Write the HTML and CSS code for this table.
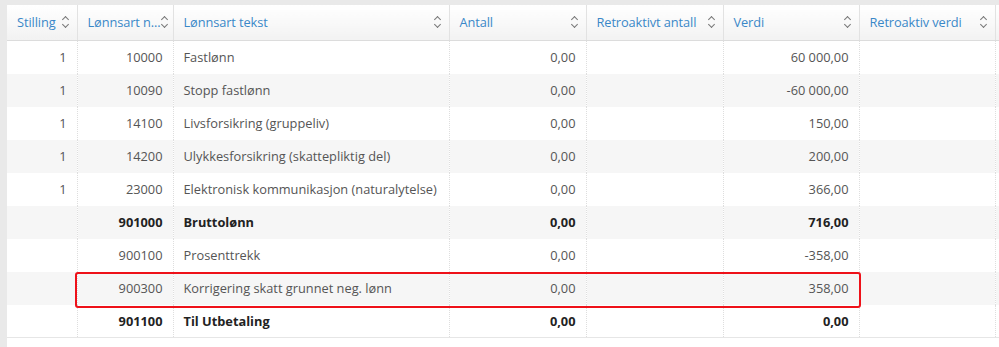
FILE: index.html
```html
<!DOCTYPE html>
<html>
<head>
<meta charset="utf-8">
<link rel="stylesheet" href="styles.css">
</head>
<body>
<div class="frame">
  <div class="grid-wrap">
    <table class="grid">
      <colgroup>
        <col class="c1"><col class="c2"><col class="c3"><col class="c4"><col class="c5"><col class="c6"><col class="c7"><col class="c8">
      </colgroup>
      <thead>
        <tr>
          <th><div class="hc"><span class="h">Stilling</span><span class="sort"></span></div></th>
          <th><div class="hc"><span class="h">Lønnsart n...</span><span class="sort"></span></div></th>
          <th><div class="hc"><span class="h">Lønnsart tekst</span><span class="sort"></span></div></th>
          <th><div class="hc"><span class="h">Antall</span><span class="sort"></span></div></th>
          <th><div class="hc"><span class="h">Retroaktivt antall</span><span class="sort"></span></div></th>
          <th><div class="hc"><span class="h">Verdi</span><span class="sort"></span></div></th>
          <th><div class="hc"><span class="h">Retroaktiv verdi</span><span class="sort"></span></div></th>
          <th></th>
        </tr>
      </thead>
      <tbody>
        <tr><td class="r">1</td><td class="r">10000</td><td>Fastlønn</td><td class="r">0,00</td><td></td><td class="r">60 000,00</td><td></td><td></td></tr>
        <tr><td class="r">1</td><td class="r">10090</td><td>Stopp fastlønn</td><td class="r">0,00</td><td></td><td class="r">-60 000,00</td><td></td><td></td></tr>
        <tr><td class="r">1</td><td class="r">14100</td><td>Livsforsikring (gruppeliv)</td><td class="r">0,00</td><td></td><td class="r">150,00</td><td></td><td></td></tr>
        <tr><td class="r">1</td><td class="r">14200</td><td>Ulykkesforsikring (skattepliktig del)</td><td class="r">0,00</td><td></td><td class="r">200,00</td><td></td><td></td></tr>
        <tr><td class="r">1</td><td class="r">23000</td><td>Elektronisk kommunikasjon (naturalytelse)</td><td class="r">0,00</td><td></td><td class="r">366,00</td><td></td><td></td></tr>
        <tr class="b"><td class="r"></td><td class="r">901000</td><td>Bruttolønn</td><td class="r">0,00</td><td></td><td class="r">716,00</td><td></td><td></td></tr>
        <tr><td class="r"></td><td class="r">900100</td><td>Prosenttrekk</td><td class="r">0,00</td><td></td><td class="r">-358,00</td><td></td><td></td></tr>
        <tr><td class="r"></td><td class="r">900300</td><td>Korrigering skatt grunnet neg. lønn</td><td class="r">0,00</td><td></td><td class="r">358,00</td><td></td><td></td></tr>
        <tr class="b"><td class="r"></td><td class="r">901100</td><td>Til Utbetaling</td><td class="r">0,00</td><td></td><td class="r">0,00</td><td></td><td></td></tr>
      </tbody>
    </table>
    <div class="highlight"></div>
  </div>
</div>
</body>
</html>
```

FILE: styles.css
```css
html, body {
  margin: 0;
  padding: 0;
  background: #e9e9e9;
  font-family: "Open Sans", "Liberation Sans", sans-serif;
  font-size: 12.8px;
  overflow: hidden;
  width: 999px;
  height: 347px;
}

.frame {
  padding: 5px 0 0 7px;
  height: 342px;
  width: 992px;
  overflow: hidden;
}

.grid-wrap {
  position: relative;
  background: #fff;
  height: 342px;
  width: 992px;
  overflow: hidden;
}

.grid {
  border-collapse: collapse;
  table-layout: fixed;
  width: 1100px;
}

.c1 { width: 70px; }
.c2 { width: 96px; }
.c3 { width: 276px; }
.c4 { width: 137px; }
.c5 { width: 137px; }
.c6 { width: 136px; }
.c7 { width: 136px; }
.c8 { width: 112px; }

.grid th {
  height: 35px;
  padding: 0 8px 0 10px;
  text-align: left;
  font-weight: normal;
  color: #3a88c8;
  background: linear-gradient(#ffffff, #f2f2f2);
  border-left: 1px solid #e2e2e2;
  border-bottom: 1px solid #dcdcdc;
  white-space: nowrap;
  overflow: hidden;
}

.grid th:nth-child(2) { padding-right: 5px; }

.grid th:first-child { border-left: none; }

.hc {
  display: flex;
  align-items: center;
  justify-content: space-between;
  padding-bottom: 1px;
}

.hc .h {
  white-space: nowrap;
  letter-spacing: -0.1px;
}

.sort {
  flex: none;
  position: relative;
  width: 7px;
  height: 12px;
}

.sort::before, .sort::after {
  content: "";
  position: absolute;
  left: 1px;
  width: 4px;
  height: 4px;
  border-left: 1.3px solid #777;
  border-top: 1.3px solid #777;
}

.sort::before {
  top: 1px;
  transform: rotate(45deg);
}

.sort::after {
  top: 6px;
  transform: rotate(225deg);
}

.grid td {
  height: 33px;
  padding: 0 10px;
  color: #555;
  border-left: 1px dotted #dedede;
  white-space: nowrap;
  overflow: hidden;
  box-sizing: border-box;
}

.grid td:first-child { border-left: none; }

.grid tbody tr:nth-child(even) td { background: #f6f6f6; }

.grid tbody tr:last-child td { border-bottom: 1px solid #e6e6e6; }

.grid td.r { text-align: right; }

.grid tr.b td {
  font-weight: bold;
  color: #222;
}

.highlight {
  position: absolute;
  left: 68px;
  top: 267px;
  width: 782px;
  height: 32px;
  border: 2px solid #ee1119;
  border-radius: 3px;
}
```
